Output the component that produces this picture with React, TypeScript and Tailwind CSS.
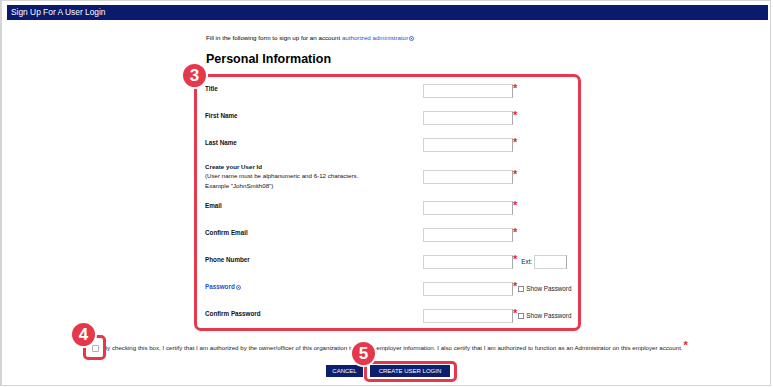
import React from 'react';

const Badge = ({ n, className }: { n: string; className: string }) => (
  <div
    className={`absolute z-10 w-[27px] h-[27px] rounded-full bg-[#e5394b] border-2 border-white flex items-center justify-center text-white font-bold text-[17px] leading-none ${className}`}
  >
    {n}
  </div>
);

const Help = () => (
  <svg width="5" height="5" viewBox="0 0 10 10" className="inline-block ml-[1px] align-middle">
    <circle cx="5" cy="5" r="4" fill="none" stroke="#2a4fd0" strokeWidth="1.6" />
    <circle cx="5" cy="5" r="1.4" fill="#2a4fd0" />
  </svg>
);

const Box = ({ className = 'w-[90px]' }: { className?: string }) => (
  <div className={`h-[14px] bg-white border border-[#d2d2d2] border-r-[#a8a8a8] ${className}`} />
);

const Star = () => (
  <span className="self-start text-[#e3262f] text-[11px] leading-[8px] font-bold">*</span>
);

const ShowPw = () => (
  <div className="flex items-center ml-[1px]">
    <span className="w-[6px] h-[6px] border border-[#8a8a8a] bg-white" />
    <span className="ml-[2px] text-[6.3px] text-[#222]">Show Password</span>
  </div>
);

type RowProps = {
  label: React.ReactNode;
  extra?: React.ReactNode;
  rowClass?: string;
};

const Row = ({ label, extra, rowClass = 'h-[27px]' }: RowProps) => (
  <div className={`flex items-center ${rowClass}`}>
    <div className="w-[218px] pb-[4px] text-[6.3px] font-bold text-[#111]">{label}</div>
    <div className="flex items-center">
      <Box />
      <Star />
      {extra}
    </div>
  </div>
);

export default function App() {
  return (
    <div className="w-[773px] h-[387px] bg-white font-['Liberation_Sans',Arial,sans-serif] text-black overflow-hidden">
      <div className="w-[771px] h-[386px] border-l-2 border-t border-r border-b border-[#d4d4d4] flex flex-col">
        <div className="mt-[4px] ml-[5px] mr-[2px] h-[15px] bg-[#0a1a6c] flex items-center pl-[4px] text-white text-[8.4px]">
          Sign Up For A User Login
        </div>

        <div className="ml-[192px] w-[387px]">
          <p className="mt-[14px] pl-[12px] text-[6.2px] leading-[8px] whitespace-nowrap">
            Fill in the following form to sign up for an account{' '}
            <span className="text-[#2a4fd0]">authorized administrator</span>
            <Help />
          </p>
          <h2 className="mt-[10px] pl-[12px] text-[12.5px] leading-[14px] font-bold">Personal Information</h2>

          <div className="relative mt-[8px] h-[257px] border-[3px] border-[#e5394b] rounded-[7px] pl-[8px]">
            <Badge n="3" className="-left-[16px] -top-[15px]" />
            <Row label="Title" />
            <Row label="First Name" />
            <Row label="Last Name" />
            <div className="flex items-center h-[36px]">
              <div className="w-[218px] text-[6.2px] leading-[9.5px] text-[#111]">
                <div className="font-bold">Create your User Id</div>
                <div>(User name must be alphanumeric and 6-12 characters.</div>
                <div>Example "JohnSmith08")</div>
              </div>
              <div className="flex items-center mt-[2px]">
                <Box />
                <Star />
              </div>
            </div>
            <Row label="Email" />
            <Row label="Confirm Email" />
            <Row
              label="Phone Number"
              extra={
                <div className="flex items-center ml-[4px]">
                  <span className="text-[6.3px] text-[#222]">Ext:</span>
                  <Box className="w-[33px] ml-[2px]" />
                </div>
              }
            />
            <Row
              label={
                <span className="text-[#2a4fd0]">
                  Password
                  <Help />
                </span>
              }
              extra={<ShowPw />}
            />
            <Row label="Confirm Password" extra={<ShowPw />} />
          </div>
        </div>

        <div className="mt-[13px] ml-[90px] flex items-center h-[8px] text-[6.17px] leading-[8px] text-[#222] whitespace-nowrap">
          <span className="relative shrink-0 w-[7px] h-[7px]">
            <span className="block w-[7px] h-[7px] border border-[#b0b0b0] rounded-[1px] bg-white" />
            <span className="absolute -left-[9px] -top-[10px] w-[23px] h-[25px] border-[3px] border-[#e5394b] rounded-[5px]" />
            <Badge n="4" className="-left-[22px] -top-[24px]" />
          </span>
          <span className="ml-[4px]">
            By checking this box, I certify that I am authorized by the owner/officer of this organization to update
            employer information. I also certify that I am authorized to function as an Administrator on this employer
            account.
          </span>
          <span className="self-start -mt-[3px] ml-[1px] text-[#e3262f] text-[11px] leading-[8px] font-bold">*</span>
        </div>

        <div className="mt-[13px] ml-[324px] flex items-center gap-[7px]">
          <button className="w-[37px] h-[12px] bg-[#0c1f6f] text-white text-[6px] leading-none flex items-center justify-center">
            CANCEL
          </button>
          <div className="relative">
            <button className="w-[80px] h-[12px] bg-[#0c1f6f] text-white text-[6px] leading-none flex items-center justify-center">
              CREATE USER LOGIN
            </button>
            <span className="absolute -left-[6px] -top-[4px] w-[93px] h-[21px] border-[3px] border-[#e5394b] rounded-[5px]" />
            <Badge n="5" className="-left-[20px] -top-[25px]" />
          </div>
        </div>
      </div>
    </div>
  );
}
